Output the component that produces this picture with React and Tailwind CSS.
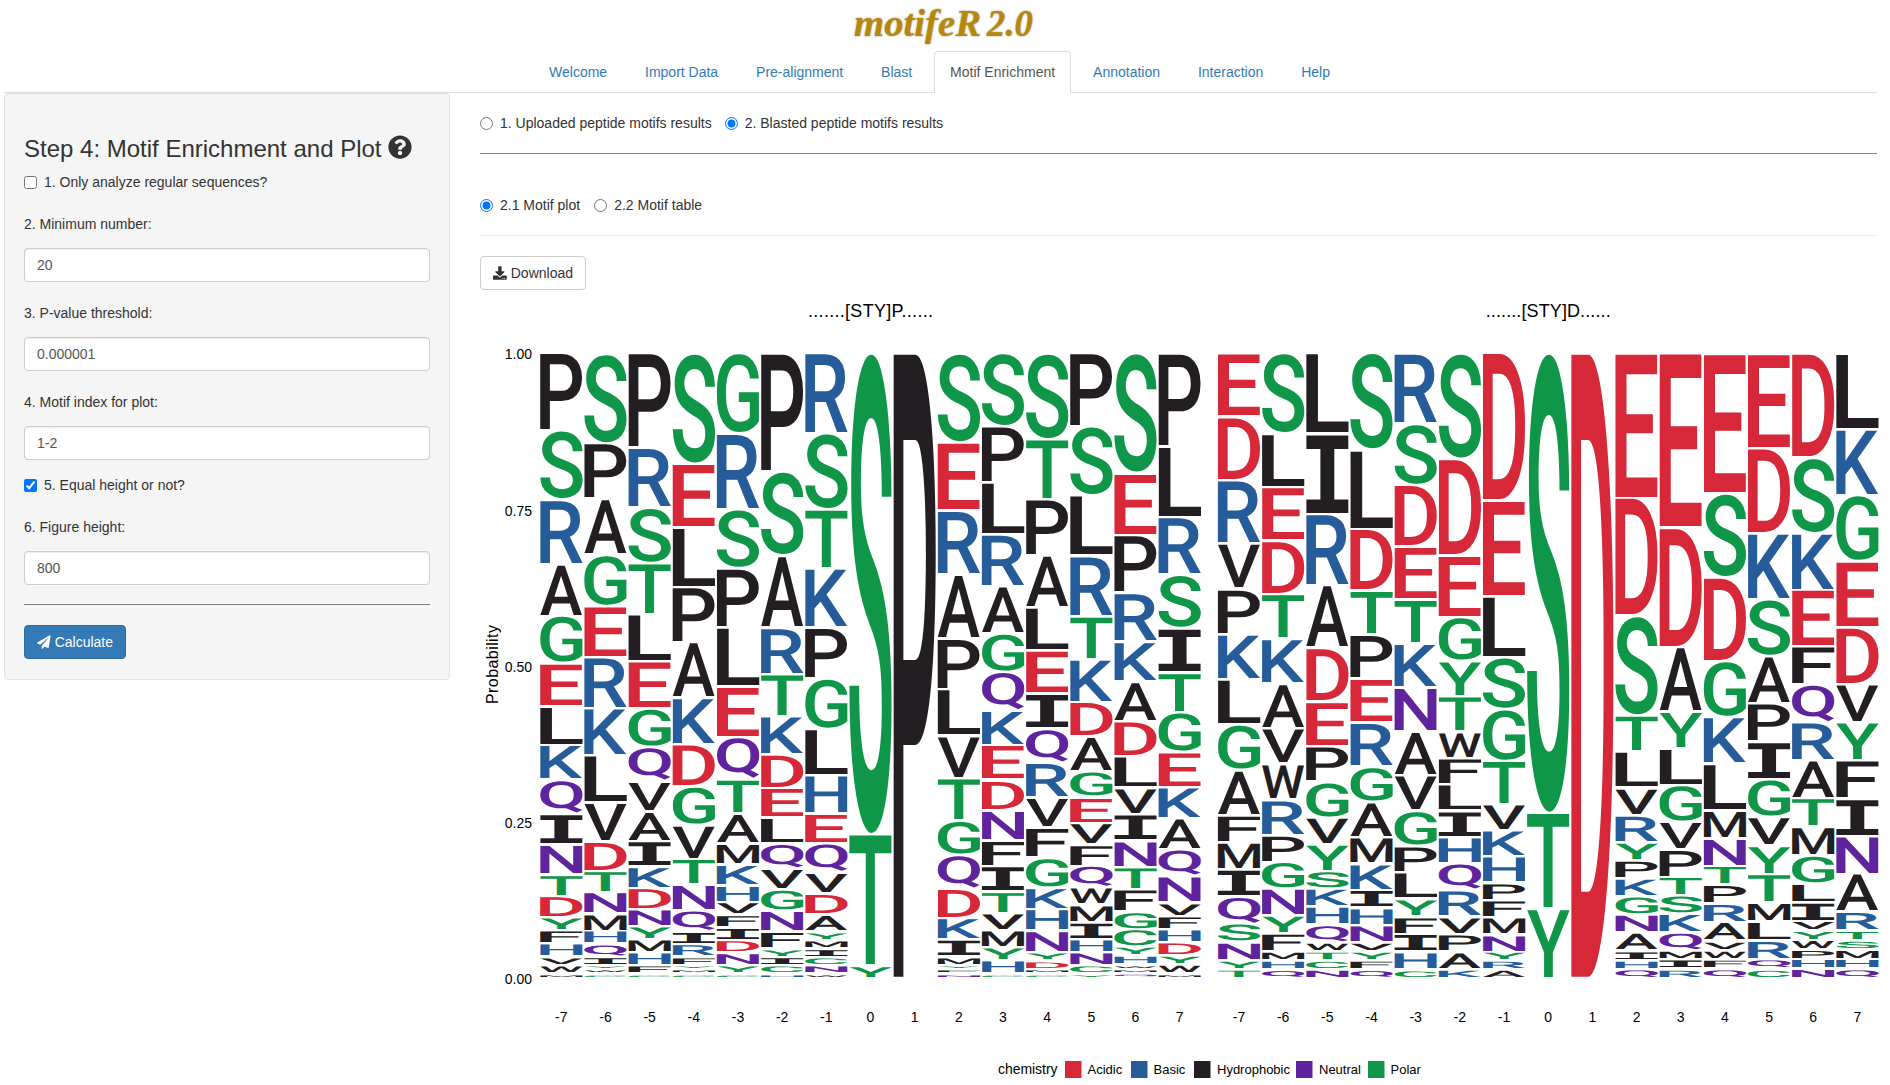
import React, { useMemo } from "react";
import { FaDownload, FaPaperPlane, FaQuestionCircle } from "react-icons/fa";

const TABS = [
  "Welcome",
  "Import Data",
  "Pre-alignment",
  "Blast",
  "Motif Enrichment",
  "Annotation",
  "Interaction",
  "Help",
];

const CHEMISTRY = [
  { name: "Acidic", color: "#D62839", letters: "DE", box: 1065, text: 1087.5 },
  { name: "Basic", color: "#255C99", letters: "HKR", box: 1131, text: 1153.5 },
  { name: "Hydrophobic", color: "#221E22", letters: "AFILMPVW", box: 1194, text: 1217 },
  { name: "Neutral", color: "#5E239D", letters: "NQ", box: 1296, text: 1319 },
  { name: "Polar", color: "#109648", letters: "CGSTY", box: 1368, text: 1390.5 },
];

const colorOf = (letter) => CHEMISTRY.find((c) => c.letters.includes(letter)).color;

// Residue counts per position, from the top of the stack to the bottom.
const MOTIFS = [
  {
    title: ".......[STY]P......",
    left: 540.3,
    columns: [
      "P18 S16 R15 A12 G11 E10 L9 K8 Q8 I7 N7 T5 D5 Y3 F3 H3 V2 W2 M1",
      "S21 P13 A13 G12 E12 R12 K11 L11 V9 D7 T5 N5 M4 H3 Q3 I2 Y1 W1 C1",
      "P22 R14 S13 T12 L11 E11 G9 Q8 V7 A7 I6 K5 D5 N4 Y3 M3 H3 F2 C1",
      "S26 E15 L14 P13 A13 K11 D10 G9 V8 T6 N6 Q5 I3 R3 F2 Y1 M1 C1",
      "G19 R18 S14 P14 L14 E12 Q10 T8 A7 M5 K5 H4 V3 F3 I3 D3 N3 Y2 C1",
      "P28 S20 A17 R11 T10 K9 D8 E7 L6 Q6 V5 G5 N5 F4 Y2 I2 C2 H1",
      "R19 S18 T14 K14 P12 G12 L11 H9 E7 Q7 V5 D5 A4 Y2 M2 I2 C2 N2 W1",
      "S114 T31 Y3",
      "P148",
      "S21 E16 R15 A15 P12 L11 V10 T10 G8 Q8 D7 K5 I4 M2 Y1 F1 N1",
      "S17 P13 L12 R12 A11 G9 Q9 K8 E8 D7 N7 F6 I6 T5 V4 M4 Y3 H3 C1",
      "S20 T14 P13 A12 L10 E10 I8 Q8 R8 V7 F7 G7 K5 H5 N5 Y2 D2 M1 C1",
      "P17 S16 L14 R14 T10 K10 D8 A8 G6 E6 V5 F5 Q5 W4 M4 I4 H3 N3 C2 Y1",
      "S27 E14 P13 R11 K9 A9 D8 L7 V6 I6 N6 T5 F5 G4 C4 Y2 H2 W1 M1 Q1",
      "P21 L16 R13 S12 I10 T9 G9 E8 K7 A7 Q6 N6 V3 F3 H3 D3 Y2 W2 M1",
    ],
  },
  {
    title: ".......[STY]D......",
    left: 1218,
    columns: [
      "E7 D7 R7 V5 P5 K5 L5 G5 A5 F3 M3 I3 Q3 S2 N2 Y1 T1",
      "S9 L6 E6 D6 T5 K5 A5 V4 W4 R4 P3 G3 N3 Y2 F2 M1 H1 Q1",
      "L9 I9 R8 A7 D6 E5 P4 G4 V3 Y3 S2 K2 H2 Q2 W1 T1 C1 N1",
      "S11 L9 D7 T5 P5 E5 R5 G4 A4 M3 K3 I2 H2 N2 V1 Y1 F1 Q1",
      "R8 S7 D7 E6 T5 K5 N5 A5 V4 G4 P3 L3 Y2 F2 I2 H2 C1",
      "S12 D11 E7 G5 Y4 T4 W3 F3 L3 I3 H3 Q3 R3 V2 P2 A2 K1",
      "D17 E11 L7 S6 G6 T5 V3 K3 H3 P2 F2 M2 N2 Y1 R1 A1",
      "S53 T11 Y8",
      "D72",
      "E16 D13 S11 T4 L4 V3 R3 Y2 P2 K2 G2 N2 A2 I1 H1 Q1",
      "E19 D13 A7 Y4 L4 G4 V3 P3 T2 S2 K2 Q2 M1 I1 R1",
      "E15 S9 D9 G6 K5 L5 M3 N3 T2 P2 R2 A2 V1 W1 F1 Q1",
      "E10 D9 K7 S6 A5 P4 I4 G4 V3 Y3 T3 M2 L2 R2 Q1 C1",
      "D11 S8 K6 E6 F4 Q4 R4 A4 T3 M3 G3 L2 I2 V1 Y1 W1 P1 H1 N1",
      "L8 K7 G7 E7 D6 V4 Y4 F4 I4 N4 A4 R2 T1 S1 M1 H1 Q1",
    ],
  },
];

const PITCH = 44.17;
const GLYPH_WIDTH = 42;
const GLYPH_GAP = 2.75;
const PLOT_TOP = 354.6;
const PLOT_HEIGHT = 624.8;

const fontOf = (letter) =>
  letter === "I"
    ? { family: '"DejaVu Sans Mono", monospace', weight: 700 }
    : { family: "Roboto, sans-serif", weight: 500 };

// Ink bounds of every residue letter at a font size of 1000, found by
// scanning the pixels of the letter drawn at (ORIGIN_X, ORIGIN_Y).
const CANVAS = 1150;
const ORIGIN_X = 60;
const ORIGIN_Y = 850;

function measureGlyphs() {
  const canvas = document.createElement("canvas");
  canvas.width = CANVAS;
  canvas.height = CANVAS;
  const ctx = canvas.getContext("2d", { willReadFrequently: true });
  const boxes = {};
  for (const letter of "ACDEFGHIKLMNPQRSTVWY") {
    const { family, weight } = fontOf(letter);
    ctx.clearRect(0, 0, CANVAS, CANVAS);
    ctx.font = `${weight} 1000px ${family}`;
    ctx.fillText(letter, ORIGIN_X, ORIGIN_Y);
    const px = ctx.getImageData(0, 0, CANVAS, CANVAS).data;
    let x0 = CANVAS;
    let x1 = 0;
    let y0 = CANVAS;
    let y1 = 0;
    for (let y = 0; y < CANVAS; y++) {
      for (let x = 0; x < CANVAS; x++) {
        if (px[(y * CANVAS + x) * 4 + 3] > 127) {
          if (x < x0) x0 = x;
          if (x > x1) x1 = x;
          if (y < y0) y0 = y;
          y1 = y;
        }
      }
    }
    boxes[letter] = {
      left: x0 - ORIGIN_X,
      width: x1 + 1 - x0,
      bottom: y1 + 1 - ORIGIN_Y,
      height: y1 + 1 - y0,
    };
  }
  return boxes;
}

function Stack({ column, x, boxes }) {
  const items = column.split(" ").map((s) => [s[0], Number(s.slice(1))]);
  const total = items.reduce((sum, [, n]) => sum + n, 0);
  let used = 0;
  return items.map(([letter, n]) => {
    const top = PLOT_TOP + (used / total) * PLOT_HEIGHT;
    const height = (n / total) * PLOT_HEIGHT - GLYPH_GAP;
    used += n;
    const b = boxes[letter];
    const sx = GLYPH_WIDTH / b.width;
    const sy = height / b.height;
    const { family, weight } = fontOf(letter);
    return (
      <text
        key={letter}
        transform={`matrix(${sx} 0 0 ${sy} ${x - b.left * sx} ${top + height - b.bottom * sy})`}
        fontFamily={family}
        fontWeight={weight}
        fontSize="1000"
        textRendering="geometricPrecision"
        fill={colorOf(letter)}
      >
        {letter}
      </text>
    );
  });
}

function MotifPlot() {
  const boxes = useMemo(measureGlyphs, []);
  return (
    <svg
      className="block overflow-visible"
      width="1405"
      height="795"
      viewBox="480 290 1405 795"
      fontFamily='"Liberation Sans", Arial, sans-serif'
      fontSize="14"
      fill="#000"
    >
      {["1.00", "0.75", "0.50", "0.25", "0.00"].map((t, i) => (
        <text key={t} x="532" y={359.4 + i * 156.2} textAnchor="end">
          {t}
        </text>
      ))}
      <text transform="translate(497.5 664.5) rotate(-90)" textAnchor="middle" fontSize="16" textLength="79">
        Probability
      </text>
      {MOTIFS.map((m) => (
        <g key={m.title}>
          <text x={m.left + 330.2} y="316.6" textAnchor="middle" fontSize="18" textLength="125">
            {m.title}
          </text>
          {m.columns.map((c, i) => (
            <g key={i}>
              <Stack column={c} x={m.left + i * PITCH} boxes={boxes} />
              <text x={m.left + i * PITCH + 21} y="1022" textAnchor="middle">
                {i - 7}
              </text>
            </g>
          ))}
        </g>
      ))}
      <text x="998" y="1074" textLength="59.5">
        chemistry
      </text>
      {CHEMISTRY.map((c) => (
        <g key={c.name}>
          <rect x={c.box} y="1061" width="16.5" height="17" fill={c.color} />
          <text x={c.text} y="1074" fontSize="13">
            {c.name}
          </text>
        </g>
      ))}
    </svg>
  );
}

function Check({ label, checked, className }) {
  return (
    <label className={`flex h-5 items-center gap-[7px] ${className}`}>
      <input type="checkbox" defaultChecked={checked} className="m-0 h-[13px] w-[13px]" />
      <span>{label}</span>
    </label>
  );
}

function Radio({ name, label, checked }) {
  return (
    <label className="flex h-5 items-center gap-[7px]">
      <input type="radio" name={name} defaultChecked={checked} className="m-0 h-[13px] w-[13px]" />
      <span>{label}</span>
    </label>
  );
}

function Field({ label, value, className }) {
  return (
    <label className={`flex flex-col gap-3.5 ${className}`}>
      <span className="h-5">{label}</span>
      <input
        type="text"
        defaultValue={value}
        className="h-[34px] w-full rounded border border-[#ccc] bg-white px-3 text-sm text-[#555] shadow-[inset_0_1px_1px_rgba(0,0,0,0.075)]"
      />
    </label>
  );
}

export default function App() {
  return (
    <div className="h-[1085px] w-[1890px] overflow-hidden bg-white pr-[13px] pl-1 font-['Liberation_Sans',Arial,sans-serif] text-sm leading-5 text-[#333]">
      <header className="flex h-[51px] justify-center">
        <svg
          width="190"
          height="51"
          viewBox="0 0 190 51"
          className="ml-2 overflow-visible [text-shadow:0_0_2px_rgba(90,70,20,0.6)]"
          fontSize="38"
          fontStyle="italic"
          fontWeight="700"
          fontFamily='"Liberation Serif", serif'
          fill="#b8860b"
        >
          <text x="4" y="35.5" textLength="127" lengthAdjust="spacingAndGlyphs">
            motifeR
          </text>
          <text x="137" y="35.5" textLength="46" lengthAdjust="spacingAndGlyphs">
            2.0
          </text>
        </svg>
      </header>

      <nav className="flex h-[42px] justify-center gap-[5.9px] border-b border-[#ddd] pr-0.5">
        {TABS.map((t) =>
          t === "Motif Enrichment" ? (
            <a
              key={t}
              className="-mb-px h-[42px] rounded-t border border-[#ddd] border-b-white bg-white px-[15px] py-2.5 text-[#555]"
            >
              {t}
            </a>
          ) : (
            <a key={t} className="border border-transparent px-[15px] py-2.5 text-[#337ab7]">
              {t}
            </a>
          )
        )}
      </nav>

      <div className="flex items-start gap-[30px]">
        <aside className="h-[587px] w-[446px] shrink-0 rounded border border-[#e3e3e3] bg-[#f5f5f5] px-[19px] pt-[42px] shadow-[inset_0_1px_1px_rgba(0,0,0,0.05)]">
          <h3 className="flex h-[26px] items-center gap-1.5 text-2xl leading-[26px] whitespace-nowrap">
            Step 4: Motif Enrichment and Plot
            <FaQuestionCircle className="-mt-1 h-6 w-6" />
          </h3>
          <Check label="1. Only analyze regular sequences?" className="mt-2.5" />
          <Field label="2. Minimum number:" value="20" className="mt-[22px]" />
          <Field label="3. P-value threshold:" value="0.000001" className="mt-[21px]" />
          <Field label="4. Motif index for plot:" value="1-2" className="mt-[21px]" />
          <Check label="5. Equal height or not?" checked className="mt-[15px]" />
          <Field label="6. Figure height:" value="800" className="mt-[22px]" />
          <hr className="mt-[19px] border-[#808080]" />
          <button className="mt-5 flex h-[34px] w-[102px] items-center gap-1 rounded border border-[#2e6da4] bg-[#337ab7] px-3 text-white">
            <FaPaperPlane className="h-3.5 w-3.5" />
            Calculate
          </button>
        </aside>

        <main className="min-w-0 flex-1">
          <div className="flex gap-[13px] pt-5">
            <Radio name="source" label="1. Uploaded peptide motifs results" />
            <Radio name="source" label="2. Blasted peptide motifs results" checked />
          </div>
          <hr className="mt-5 border-[#808080]" />
          <div className="mt-[41px] flex gap-3.5">
            <Radio name="view" label="2.1 Motif plot" checked />
            <Radio name="view" label="2.2 Motif table" />
          </div>
          <hr className="mt-5 border-[#eee]" />
          <button className="mt-5 flex h-[34px] w-[106px] items-center gap-1 rounded border border-[#ccc] bg-white px-3">
            <FaDownload className="h-3.5 w-3.5" />
            Download
          </button>
          <MotifPlot />
        </main>
      </div>
    </div>
  );
}
